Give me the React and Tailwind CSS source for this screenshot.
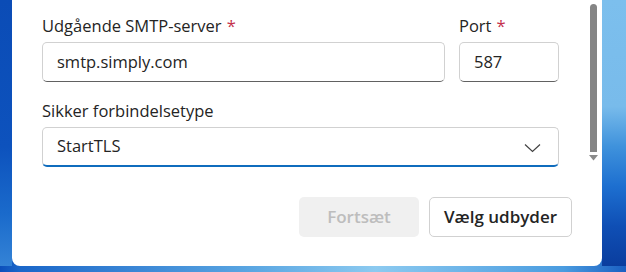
function Label({ text, required }) {
  return (
    <div className="h-[24px] leading-[24px] text-[16.5px] text-[#242424] mb-[4px] whitespace-nowrap">
      {text}
      {required && <span className="text-[#c4314b] ml-[5px]">*</span>}
    </div>
  );
}

function TextField({ value }) {
  return (
    <div className="h-[40px] flex items-center pl-[14px] rounded-[5px] border border-[#d1d1d1] border-b-[#616161] bg-white text-[16.5px] text-[#242424]">
      {value}
    </div>
  );
}

export default function App() {
  return (
    <div
      className="w-[626px] h-[272px] flex pl-[12px] pr-[24px] pb-[6px] overflow-hidden bg-[linear-gradient(90deg,#0c4fbb_0%,#1a66c9_3%,#5aa6e2_40%,#8ccaf0_60%,#4a9ce0_90%,#1a5fc2_100%)]"
      style={{ fontFamily: '"Open Sans", "Noto Sans", sans-serif' }}
    >
      <div className="relative w-full h-full">
        {/* wallpaper strips beside the dialog */}
        <div className="absolute -right-[24px] top-0 w-[24px] h-full bg-[linear-gradient(180deg,#7cbfed_0%,#78bbeb_40%,#3f92dc_55%,#1d6fd0_70%,#0f4fb5_85%,#0a3d9e_100%)]" />
        <div className="absolute -left-[12px] top-0 w-[12px] h-[266px] bg-[linear-gradient(180deg,#0b4cb6_0%,#0d52bd_55%,#1a6acb_80%,#3483d6_100%)]" />
        <div className="flex h-full bg-white rounded-b-[8px]">
          <div className="flex-1 flex flex-col pl-[30px] pr-[18px] pt-[14px]">
            <div className="pr-[13px]">
              <div className="flex gap-[14px]">
                <div className="flex-1">
                  <Label text="Udgående SMTP-server" required />
                  <TextField value="smtp.simply.com" />
                </div>
                <div className="w-[100px]">
                  <Label text="Port" required />
                  <TextField value="587" />
                </div>
              </div>
              <div className="mt-[17px]">
                <Label text="Sikker forbindelsetype" />
                <div className="h-[40px] flex items-center justify-between pl-[14px] pr-[17px] rounded-[5px] border border-[#d1d1d1] border-b-2 border-b-[#0f6cbd] text-[16.5px] text-[#242424]">
                  <span>StartTLS</span>
                  <svg width="17" height="10" viewBox="0 0 17 10" className="mt-[2px]">
                    <path d="M1 1.5 L8.5 8.5 L16 1.5" fill="none" stroke="#424242" strokeWidth="1.2" />
                  </svg>
                </div>
              </div>
            </div>
            <div className="flex justify-end gap-[10px] mt-[30px]">
              <button className="w-[120px] h-[40px] rounded-[5px] bg-[#f0f0f0] text-[#bdbdbd] text-[17px] font-semibold">
                Fortsæt
              </button>
              <button className="w-[143px] h-[40px] rounded-[5px] bg-white border border-[#d1d1d1] text-[#242424] text-[17px] font-semibold">
                Vælg udbyder
              </button>
            </div>
          </div>
          <div className="w-[12px] flex flex-col items-start pt-[4px] pr-[3px]">
            <div className="w-[7px] h-[148px] bg-[#858585] rounded-t-full" />
            <div className="w-[9px] h-[12px] -ml-[1px] flex items-center justify-center">
              <svg width="9" height="6" viewBox="0 0 9 6">
                <path d="M0 0 L9 0 L4.5 5.5 Z" fill="#8a8a8a" />
              </svg>
            </div>
          </div>
        </div>
      </div>
    </div>
  );
}
